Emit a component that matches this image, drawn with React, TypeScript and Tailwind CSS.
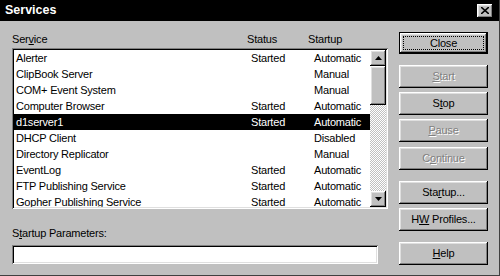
import React from 'react'

interface Service {
  name: string
  status: string
  startup: string
}

const services: Service[] = [
  { name: 'Alerter', status: 'Started', startup: 'Automatic' },
  { name: 'ClipBook Server', status: '', startup: 'Manual' },
  { name: 'COM+ Event System', status: '', startup: 'Manual' },
  { name: 'Computer Browser', status: 'Started', startup: 'Automatic' },
  { name: 'd1server1', status: 'Started', startup: 'Automatic' },
  { name: 'DHCP Client', status: '', startup: 'Disabled' },
  { name: 'Directory Replicator', status: '', startup: 'Manual' },
  { name: 'EventLog', status: 'Started', startup: 'Automatic' },
  { name: 'FTP Publishing Service', status: 'Started', startup: 'Automatic' },
  { name: 'Gopher Publishing Service', status: 'Started', startup: 'Automatic' },
]

const raised =
  'bg-[#c0c0c0] shadow-[inset_-1px_-1px_0_#000,inset_1px_1px_0_#fff,inset_-2px_-2px_0_#808080,inset_2px_2px_0_#dfdfdf]'
const sunken =
  'shadow-[inset_1px_1px_0_#808080,inset_-1px_-1px_0_#fff,inset_2px_2px_0_#000,inset_-2px_-2px_0_#dfdfdf]'

// ── Push button ───────────────────────────────────────────────────────────────

function Button({
  children,
  disabled,
  className = '',
}: {
  children: React.ReactNode
  disabled?: boolean
  className?: string
}) {
  return (
    <div
      className={`h-[23px] w-[89px] flex items-center justify-center ${raised} ${
        disabled ? 'text-[#808080] [text-shadow:1px_1px_0_#fff]' : 'text-black'
      } ${className}`}
    >
      <span>{children}</span>
    </div>
  )
}

function Arrow({ up }: { up?: boolean }) {
  return (
    <div className={`w-[16px] h-[16px] flex items-center justify-center ${raised}`}>
      <svg width="7" height="4" viewBox="0 0 7 4">
        {up ? <polygon points="3.5,0 7,4 0,4" fill="#000" /> : <polygon points="0,0 7,0 3.5,4" fill="#000" />}
      </svg>
    </div>
  )
}

// ── Main dialog ───────────────────────────────────────────────────────────────

export default function App() {
  return (
    <div className="w-[500px] h-[276px] bg-[#c0c0c0] flex flex-col font-['Liberation_Sans',Arial,sans-serif] text-[11px] tracking-[-0.2px] text-black overflow-hidden border-r border-b border-[#404040]">
      {/* title bar */}
      <div className="h-[21px] bg-black flex items-center justify-between pl-[5px] pr-[6px] shrink-0">
        <span className="text-white font-bold text-[12.5px] tracking-[0px]">Services</span>
        <div className={`w-[16px] h-[14px] flex items-center justify-center ${raised}`}>
          <svg width="8" height="7" viewBox="0 0 8 7">
            <path d="M0 0 L8 7 M8 0 L0 7" stroke="#000" strokeWidth="1.6" />
          </svg>
        </div>
      </div>

      <div className="flex flex-1">
        {/* left column */}
        <div className="ml-[12px] w-[376px] flex flex-col pt-[11px]">
          <div className="h-[16px] relative leading-[14px]">
            <span>
              Ser<span className="underline">v</span>ice
            </span>
            <span className="absolute left-[235px] top-0">Status</span>
            <span className="absolute left-[296px] top-0">Startup</span>
          </div>

          <div className={`h-[161px] bg-white p-[2px] flex ${sunken}`}>
            <div className="flex-1 flex flex-col overflow-hidden">
              {services.map((s, i) => (
                <div
                  key={s.name}
                  className={`h-[16px] shrink-0 flex items-center pl-[2px] ${
                    i === 4 ? 'bg-black text-white' : ''
                  }`}
                >
                  <span className="w-[235px] whitespace-nowrap">{s.name}</span>
                  <span className="w-[63px]">{s.status}</span>
                  <span>{s.startup}</span>
                </div>
              ))}
            </div>
            <div className="w-[16px] flex flex-col bg-[repeating-conic-gradient(#c0c0c0_0%_25%,#fff_0%_50%)] bg-[length:2px_2px]">
              <Arrow up />
              <div className={`h-[39px] ${raised}`} />
              <div className="flex-1" />
              <Arrow />
            </div>
          </div>

          <div className="mt-[17px] leading-[14px]">
            S<span className="underline">t</span>artup Parameters:
          </div>
          <div className={`mt-[5px] h-[19px] w-[366px] bg-white ${sunken}`} />
        </div>

        {/* buttons */}
        <div className="ml-[11px] flex flex-col pt-[11px]">
          <div className="h-[22px] w-[89px] border border-black">
            <div className={`h-full w-full flex items-center justify-center p-[3px] ${raised}`}>
              <div className="h-full w-full flex items-center justify-center border border-dotted border-black">
                Close
              </div>
            </div>
          </div>
          <Button disabled className="mt-[11px]">
            <span className="underline">S</span>tart
          </Button>
          <Button className="mt-[4px]">
            S<span className="underline">t</span>op
          </Button>
          <Button disabled className="mt-[4px]">
            <span className="underline">P</span>ause
          </Button>
          <Button disabled className="mt-[5px]">
            C<span className="underline">o</span>ntinue
          </Button>
          <Button className="mt-[11px]">
            Sta<span className="underline">r</span>tup...
          </Button>
          <Button className="mt-[4px]">
            H<span className="underline">W</span> Profiles...
          </Button>
          <Button className="mt-[11px]">
            <span className="underline">H</span>elp
          </Button>
        </div>
      </div>
    </div>
  )
}
